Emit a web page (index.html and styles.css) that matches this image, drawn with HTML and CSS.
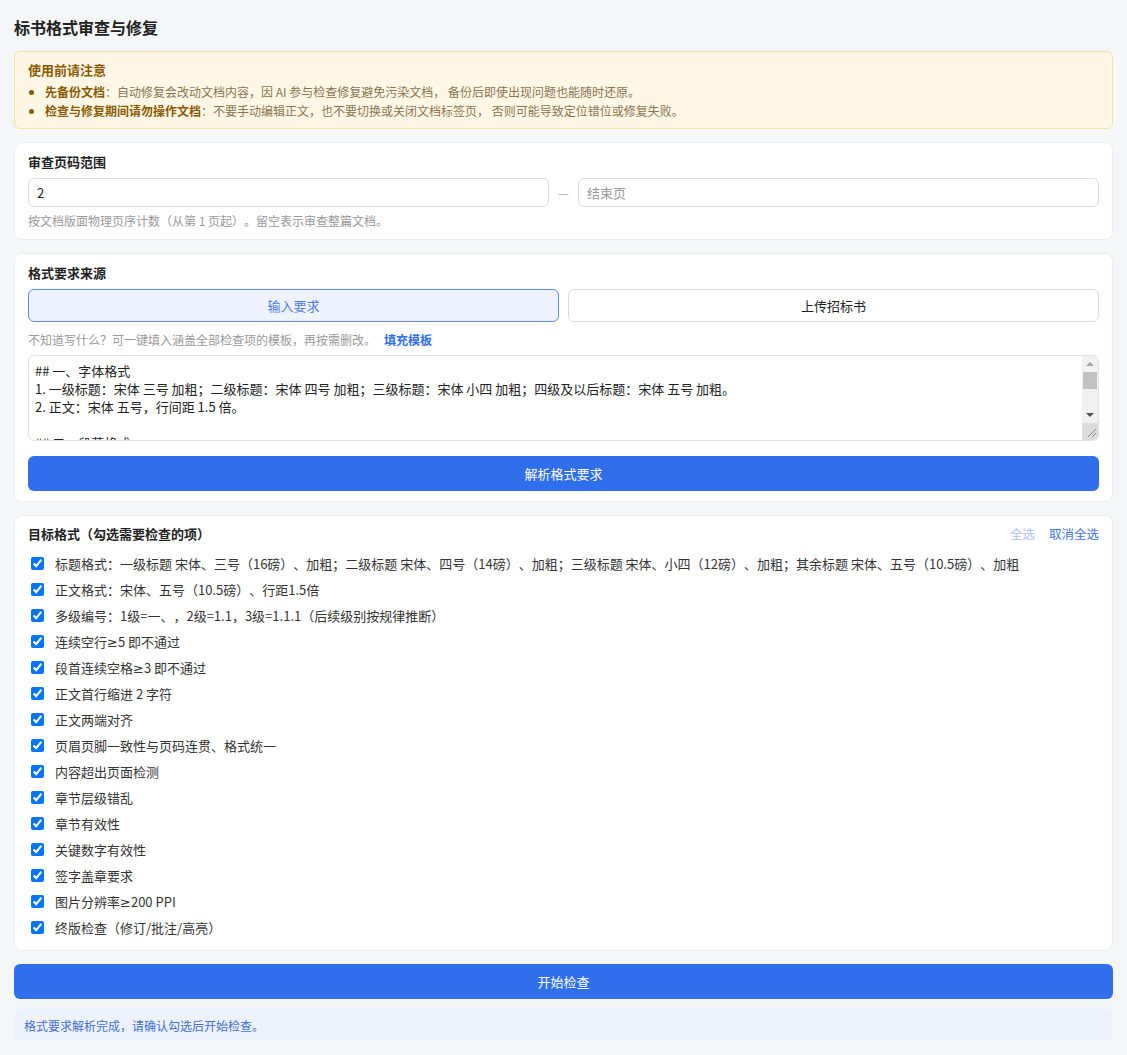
FILE: index.html
```html
<!DOCTYPE html>
<html lang="zh-CN">
<head>
<meta charset="utf-8">
<title>标书格式审查与修复</title>
<link rel="stylesheet" href="styles.css">
</head>
<body>
<div class="page">
  <h1 class="page-title">标书格式审查与修复</h1>

  <div class="notice">
    <div class="notice-title">使用前请注意</div>
    <ul class="notice-list">
      <li><b>先备份文档</b>：自动修复会改动文档内容，因 AI 参与检查修复避免污染文档， 备份后即使出现问题也能随时还原。</li>
      <li><b>检查与修复期间请勿操作文档</b>：不要手动编辑正文，也不要切换或关闭文档标签页， 否则可能导致定位错位或修复失败。</li>
    </ul>
  </div>

  <section class="card card-range">
    <div class="card-title">审查页码范围</div>
    <div class="range-row">
      <input class="text-input" type="text" value="2">
      <span class="range-dash">—</span>
      <input class="text-input" type="text" placeholder="结束页">
    </div>
    <div class="help">按文档版面物理页序计数（从第 1 页起）。留空表示审查整篇文档。</div>
  </section>

  <section class="card card-source">
    <div class="card-title">格式要求来源</div>
    <div class="tabs">
      <button class="tab tab-active">输入要求</button>
      <button class="tab">上传招标书</button>
    </div>
    <div class="hint">不知道写什么？可一键填入涵盖全部检查项的模板，再按需删改。<a class="hint-link">填充模板</a></div>
    <div class="editor">
      <textarea class="req-text">## 一、字体格式
1. 一级标题：宋体 三号 加粗；二级标题：宋体 四号 加粗；三级标题：宋体 小四 加粗；四级及以后标题：宋体 五号 加粗。
2. 正文：宋体 五号，行间距 1.5 倍。

## 二、段落格式
1. 正文首行缩进 2 字符。
2. 正文两端对齐。
3. 连续空行≥5 即不通过；段首连续空格≥3 即不通过。

## 三、编号与结构
1. 多级编号：1级=一、，2级=1.1，3级=1.1.1。
2. 章节层级不得错乱，章节须有效。

## 四、其他
1. 页眉页脚一致，页码连贯、格式统一。
2. 图片分辨率≥200 PPI。
3. 终版检查（修订/批注/高亮）。</textarea>
      <div class="vscroll">
        <div class="sb-btn"><svg width="8" height="4" viewBox="0 0 8 4"><polygon points="4,0 8,4 0,4" fill="#a3a3a3"/></svg></div>
        <div class="sb-track"><div class="sb-thumb"></div></div>
        <div class="sb-btn"><svg width="8" height="4" viewBox="0 0 8 4"><polygon points="0,0 8,0 4,4" fill="#505050"/></svg></div>
        <div class="sb-corner"><svg width="16" height="16" viewBox="0 0 16 16"><path d="M14 6 L6 14 M14 10 L10 14" stroke="#8a8a8a" stroke-width="1" fill="none"/></svg></div>
      </div>
    </div>
    <button class="primary-btn parse-btn">解析格式要求</button>
  </section>

  <section class="card card-targets">
    <div class="targets-head">
      <div class="card-title">目标格式（勾选需要检查的项）</div>
      <div class="targets-actions">
        <span class="act act-disabled">全选</span>
        <span class="act">取消全选</span>
      </div>
    </div>
    <div class="check-list">
      <label class="check-item"><input type="checkbox" checked><span>标题格式：一级标题 宋体、三号（16磅）、加粗；二级标题 宋体、四号（14磅）、加粗；三级标题 宋体、小四（12磅）、加粗；其余标题 宋体、五号（10.5磅）、加粗</span></label>
      <label class="check-item"><input type="checkbox" checked><span>正文格式：宋体、五号（10.5磅）、行距1.5倍</span></label>
      <label class="check-item"><input type="checkbox" checked><span>多级编号：1级=一、，2级=1.1，3级=1.1.1（后续级别按规律推断）</span></label>
      <label class="check-item"><input type="checkbox" checked><span>连续空行<span class="sym">≥</span>5 即不通过</span></label>
      <label class="check-item"><input type="checkbox" checked><span>段首连续空格<span class="sym">≥</span>3 即不通过</span></label>
      <label class="check-item"><input type="checkbox" checked><span>正文首行缩进 2 字符</span></label>
      <label class="check-item"><input type="checkbox" checked><span>正文两端对齐</span></label>
      <label class="check-item"><input type="checkbox" checked><span>页眉页脚一致性与页码连贯、格式统一</span></label>
      <label class="check-item"><input type="checkbox" checked><span>内容超出页面检测</span></label>
      <label class="check-item"><input type="checkbox" checked><span>章节层级错乱</span></label>
      <label class="check-item"><input type="checkbox" checked><span>章节有效性</span></label>
      <label class="check-item"><input type="checkbox" checked><span>关键数字有效性</span></label>
      <label class="check-item"><input type="checkbox" checked><span>签字盖章要求</span></label>
      <label class="check-item"><input type="checkbox" checked><span>图片分辨率<span class="sym">≥</span>200 PPI</span></label>
      <label class="check-item"><input type="checkbox" checked><span>终版检查（修订/批注/高亮）</span></label>
    </div>
  </section>

  <button class="primary-btn start-btn">开始检查</button>

  <div class="status">格式要求解析完成，请确认勾选后开始检查。</div>
</div>
</body>
</html>
```

FILE: styles.css
```css
* { box-sizing: border-box; }

html, body {
  margin: 0;
  padding: 0;
  background: #f5f6f8;
}

body {
  font-family: "Noto Sans CJK SC", "Noto Sans", sans-serif;
  font-size: 13px;
  color: #333;
  text-spacing-trim: space-all;
}

.page {
  padding: 16px 14px 14px;
  display: flex;
  flex-direction: column;
}

.page-title {
  margin: 0 0 13px;
  font-size: 16px;
  line-height: 22px;
  font-weight: 700;
  color: #222;
}

.notice {
  background: #fff7e6;
  border: 1px solid #f6dfa3;
  border-radius: 6px;
  padding: 9px 13px 8px;
  margin-bottom: 13px;
}

.notice-title {
  font-weight: 700;
  color: #8a5a00;
  line-height: 18px;
}

.notice-list {
  margin: 3px 0 0;
  padding-left: 17px;
  color: #8a7550;
  font-size: 12px;
  line-height: 19px;
}

.notice-list li::marker { color: #8a5a00; }

.notice-list b {
  color: #8a5a00;
  font-weight: 700;
}

.card {
  background: #fff;
  border: 1px solid #ebedf0;
  border-radius: 8px;
  padding: 10px 13px 9px;
  margin-bottom: 13px;
}

.card-source { padding-bottom: 10px; }

.card-targets { padding: 9px 13px 10px; }

.card-title {
  font-weight: 700;
  color: #222;
  line-height: 18px;
}

.range-row {
  display: flex;
  align-items: center;
  gap: 9px;
  margin-top: 7px;
}

.text-input {
  flex: 1;
  height: 29px;
  border: 1px solid #dcdde3;
  border-radius: 6px;
  padding: 0 8px;
  font: inherit;
  font-size: 13px;
  color: #222;
  background: #fff;
  outline: none;
}

.text-input::placeholder { color: #999; }

.range-dash {
  color: #aaa;
  font-size: 12px;
}

.help {
  margin-top: 5px;
  font-size: 12px;
  color: #999;
  line-height: 18px;
}

.tabs {
  display: flex;
  gap: 9px;
  margin-top: 7px;
}

.tab {
  flex: 1;
  height: 33px;
  border: 1px solid #dcdde3;
  border-radius: 6px;
  background: #fff;
  font: inherit;
  font-size: 13px;
  color: #222;
}

.tab-active {
  background: #eef3ff;
  border-color: #5b8cef;
  color: #4c7de6;
}

.hint {
  margin-top: 9px;
  font-size: 12px;
  color: #999;
  line-height: 18px;
}

.hint-link {
  margin-left: 8px;
  color: #2f6fec;
  font-weight: 700;
}

.editor {
  display: flex;
  height: 86px;
  margin-top: 6px;
  border: 1px solid #e2e3e8;
  border-radius: 6px;
  overflow: hidden;
  background: #fff;
}

.req-text {
  flex: 1;
  min-width: 0;
  height: 100%;
  border: none;
  padding: 6px 6px;
  font: inherit;
  font-size: 13px;
  line-height: 18px;
  color: #222;
  overflow: hidden;
  resize: none;
  outline: none;
  background: transparent;
}

.vscroll {
  width: 16px;
  display: flex;
  flex-direction: column;
  background: #f1f1f1;
}

.sb-btn {
  height: 16px;
  display: flex;
  align-items: center;
  justify-content: center;
}

.sb-btn svg { display: block; }

.sb-track {
  flex: 1;
  padding: 0 1px;
}

.sb-thumb {
  height: 17px;
  background: #c1c1c1;
}

.sb-corner {
  height: 17px;
  background: #dcdcdc;
}

.sb-corner svg { display: block; }

.primary-btn {
  display: block;
  width: 100%;
  height: 35px;
  border: none;
  border-radius: 6px;
  background: #2f6fec;
  color: #fff;
  font: inherit;
  font-size: 13px;
}

.parse-btn { margin-top: 15px; }

.targets-head {
  display: flex;
  justify-content: space-between;
  align-items: center;
  height: 18px;
}

.targets-actions {
  display: flex;
  gap: 14px;
  font-size: 12.5px;
  line-height: 18px;
}

.act { color: #3f74e6; }
.act-disabled { color: #abc3f5; }

.check-list {
  margin-top: 7px;
  display: flex;
  flex-direction: column;
}

.check-item {
  display: flex;
  align-items: center;
  gap: 11px;
  height: 26px;
  color: #333;
}

.check-item input {
  margin: 0 0 0 3px;
  width: 13px;
  height: 13px;
}

.sym {
  font-family: "Noto Sans", "DejaVu Sans", sans-serif;
}

.start-btn { margin-top: 0; }

.status {
  margin-top: 10px;
  height: 32px;
  display: flex;
  align-items: center;
  padding: 0 10px;
  background: #edf2fd;
  border-radius: 6px;
  color: #3f6fd6;
  font-size: 12px;
}
```
